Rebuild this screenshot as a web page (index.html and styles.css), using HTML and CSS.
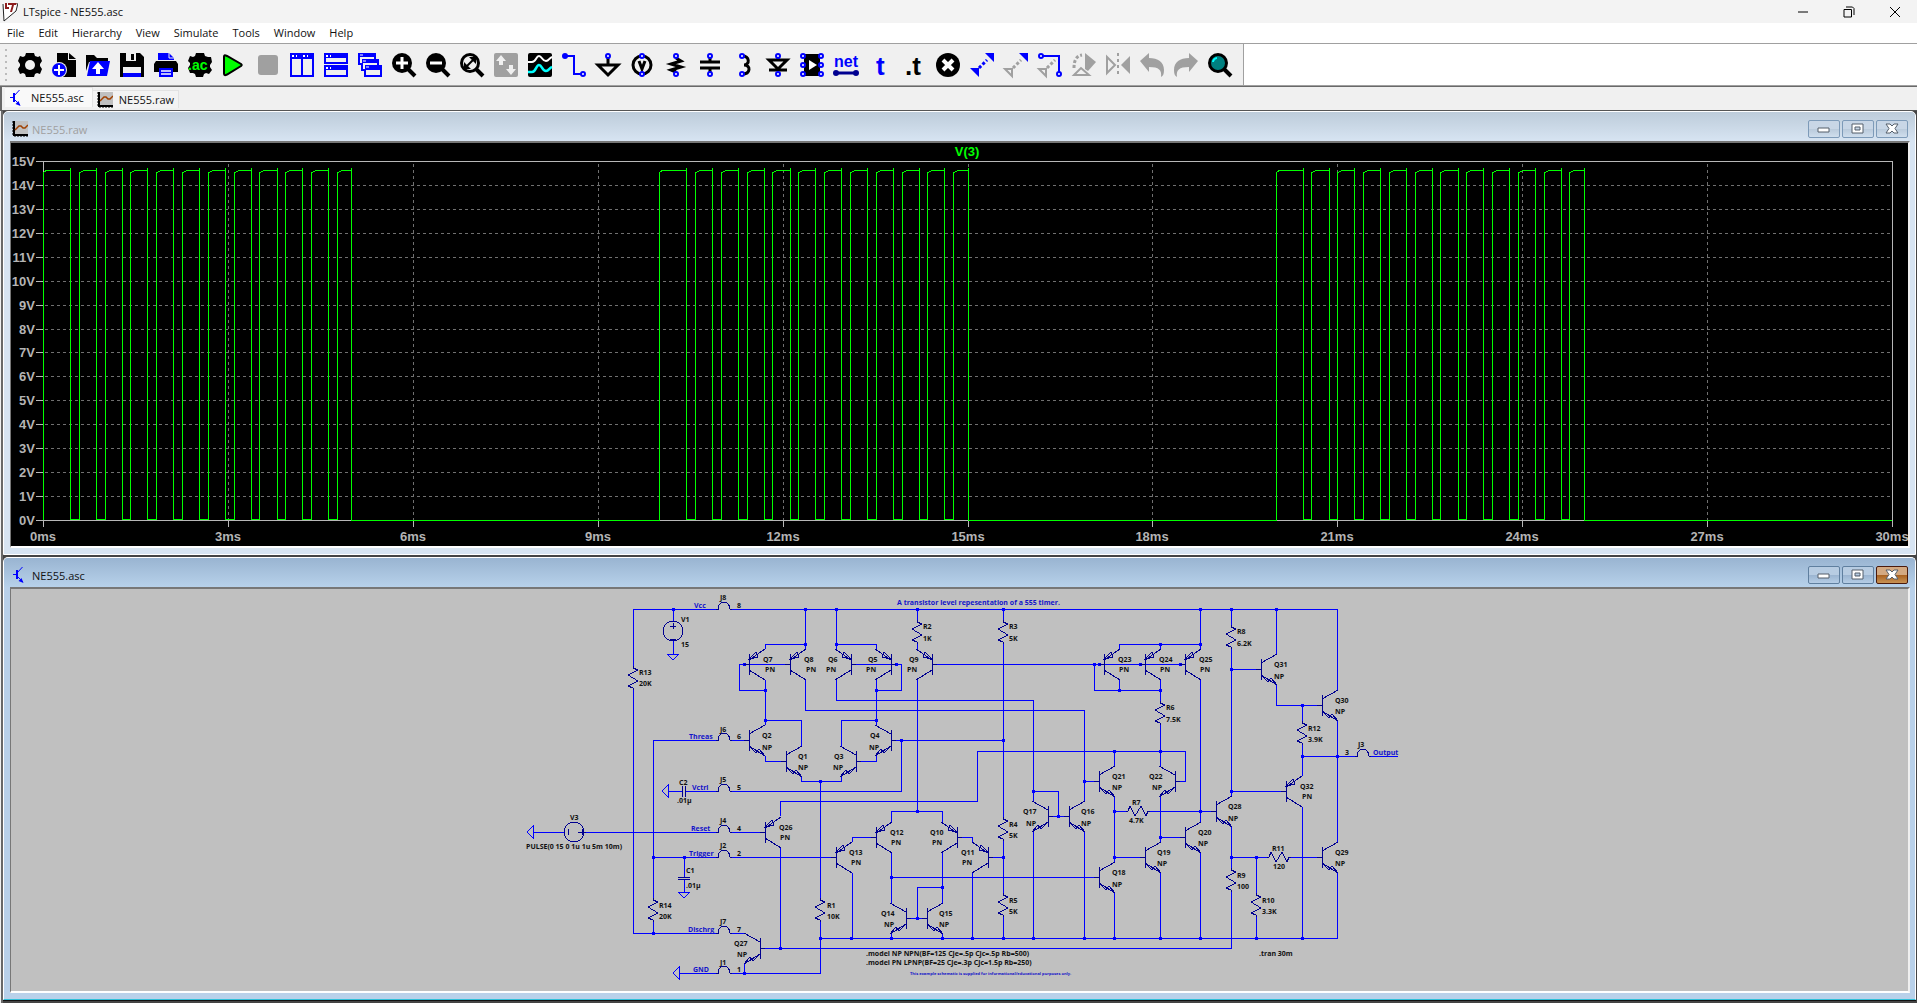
FILE: index.html
```html
<!DOCTYPE html>
<html lang="en">
<head>
<meta charset="utf-8">
<title>LTspice - NE555.asc</title>
<link rel="stylesheet" href="styles.css">
</head>
<body>
<svg class="sprites" aria-hidden="true">
  <defs>
    <symbol id="i-trace" viewBox="0 0 16 16"><path fill="#c0c0c0" d="M3 0h13v13H3z"/><path stroke="#000" stroke-width="2" fill="none" d="M2 0v14H16"/><path stroke="#000" fill="none" d="M0 1h2M0 4h2M0 7h2M0 10h2M0 13h2M3 16v-2M6 16v-2M9 16v-2M12 16v-2M15 16v-2"/><path stroke="#a04000" stroke-width="1.5" fill="none" d="M3 9l2-2 2-2 2 0 2 2h2l3-3"/></symbol>
    <symbol id="i-bjt" viewBox="0 0 16 16"><path stroke="#00f" fill="none" d="M1 7.500h4M10.500 0L5 6M5 9l6 6"/><path stroke="#00f" stroke-width="2" d="M5 3v9"/><path fill="#00f" d="M11.500 16l-5-2 3-3z"/></symbol>
    <symbol id="b-min" viewBox="0 0 32 18"><path class="glyph" d="M10 8h11v4H10z"/></symbol>
    <symbol id="b-max" viewBox="0 0 32 18"><path class="glyph" fill-rule="evenodd" d="M10 4h11v9H10zM13 7v3h5V7z"/></symbol>
    <symbol id="b-close" viewBox="0 0 32 18"><path class="glyph" d="M10 4h4l2 2 2-2h4l-3 4.500 3 4.500h-4l-2-2-2 2h-4l3-4.500z"/></symbol>
  </defs>
</svg>

<header class="titlebar">
  <svg class="app-icon" viewBox="0 0 16 20"><path d="M1 2L2 19 14 9 16 1" fill="#fff" stroke="#222"/><path d="M3 1v6h4V5H5V1zM6 1h9l-1 2h-2l-2 7H8l2-7H6z" fill="#8c1c1c"/></svg>
  <h1>LTspice - NE555.asc</h1>
  <div class="caption">
    <button aria-label="Minimize"><svg viewBox="0 0 12 12"><path d="M1 6h10"/></svg></button>
    <button aria-label="Restore"><svg viewBox="0 0 12 12"><path d="M1 3.500h7.500V11H1zM3 1h6.500L11 2.500V9"/></svg></button>
    <button aria-label="Close"><svg viewBox="0 0 12 12"><path d="M1 1l10 10M11 1L1 11"/></svg></button>
  </div>
</header>

<nav class="menu">
  <button>File</button><button>Edit</button><button>Hierarchy</button><button>View</button><button>Simulate</button><button>Tools</button><button>Window</button><button>Help</button>
</nav>

<div class="toolrow">
<div class="toolbar" role="toolbar">
  <span class="grip"></span>
  <button aria-label="Settings"><svg viewBox="0 0 24 24"><path d="M8 0h8l1 3 3 1 2-1 2 5-2 3v2l2 3-2 5-3-1-2 1-1 3H8l-1-3-2-1-3 1-2-5 2-3v-2L0 8l2-5 3 1 2-1z"/><circle cx="12" cy="12" r="5" fill="#f0f0f0"/></svg></button>
  <button aria-label="New schematic"><svg viewBox="0 0 24 24"><path d="M5 0h11v7h8v17H5z"/><path d="M17 0l7 6h-7z"/><circle cx="7" cy="17" r="8" fill="#f0f0f0"/><circle cx="7" cy="17" r="7" class="b"/><path class="sw" d="M7 12v10M2 17h10"/></svg></button>
  <button aria-label="Open"><svg viewBox="0 0 24 24"><path d="M0 2h8l3 3h11v4H3l-3 9z"/><path class="b" d="M4 8h20l-3 15H1z"/><path fill="#fff" d="M12 9l6 7h-4v5h-4v-5H6z"/></svg></button>
  <button aria-label="Save"><svg viewBox="0 0 24 24"><path d="M0 0h20l4 4v20H0z"/><path fill="#f0f0f0" d="M6 0h10v8H6zM3 14h18v6H3z"/><path d="M11 1h3v6h-3z"/><path class="b" d="M3 20h18v4H3z"/></svg></button>
  <button aria-label="Print"><svg viewBox="0 0 24 24"><path class="b" d="M4 0h11l5 5v2H4zM5 15h14v9H5z"/><path stroke="#f0f0f0" fill="none" d="M15 0v5h5"/><path d="M2 8h20l2 3v8h-5v-4H5v4H0v-8z"/><path stroke="#fff" stroke-width="1.500" d="M7 18h10M7 21h10"/></svg></button>
  <button aria-label="Configure analysis"><svg viewBox="0 0 24 24"><path d="M8 0h8l1 3 3 1 3 0 1 5-2 3v2l2 3-3 4-3-1-2 1-1 3H8l-1-3-2-1-3 0-2-5 2-3v-2L0 8l2-5 3 1 2-1z"/><text x="0" y="17" class="ac">.ac</text></svg></button>
  <button aria-label="Run"><svg viewBox="0 0 24 24"><path d="M2 3.500v17c0 2 1 2 3 1L19 13c1-1 1-1 0-2L5 3C3 2 2 2 2 3.500z" fill="#0f0" stroke="#000" stroke-width="2"/></svg></button>
  <button aria-label="Stop"><svg viewBox="0 0 24 24"><rect x="2" y="2" width="20" height="20" rx="3" fill="#a0a0a0"/></svg></button>
  <button aria-label="Tile vertically"><svg viewBox="0 0 24 24"><path class="b" d="M0 0h24v24H0z"/><path fill="#f0f0f0" d="M2 6h9v16H2zM13 6h9v16h-9z"/><path stroke="#fff" stroke-width="2" d="M2 3h2M6 3h1M13 3h2M17 3h1"/></svg></button>
  <button aria-label="Tile horizontally"><svg viewBox="0 0 24 24"><path class="b" d="M0 0h24v11H0zM0 12h24v12H0z"/><path fill="#f0f0f0" d="M2 5h20v4H2zM2 17h20v5H2z"/><path stroke="#fff" stroke-width="2" d="M2 3h2M6 3h1M2 15h2M6 15h1"/></svg></button>
  <button aria-label="Cascade"><svg viewBox="0 0 24 24"><path class="b" d="M0 0h18v6h3v6h3v12H6v-6H3v-6H0z"/><path fill="#f0f0f0" d="M2 4h14v2H4v4H2zM5 10h14v2H7v4H5zM8 17h14v5H8z"/><path stroke="#fff" d="M2 2h3M5 8h3M8 14h3"/></svg></button>
  <button aria-label="Zoom in"><svg viewBox="0 0 24 24"><path class="k3" d="M16 16l7 7"/><circle cx="10" cy="10" r="10"/><path class="sw3" d="M10 4v12M4 10h12"/></svg></button>
  <button aria-label="Zoom out"><svg viewBox="0 0 24 24"><path class="k3" d="M16 16l7 7"/><circle cx="10" cy="10" r="10"/><path class="sw3" d="M4 10h12"/></svg></button>
  <button aria-label="Zoom to fit"><svg viewBox="0 0 24 24"><path class="k3" d="M16 16l7 7"/><circle cx="10" cy="10" r="10"/><circle cx="10" cy="10" r="7" fill="#f0f0f0"/><path d="M9 4h7v7zM4 9v7h7z"/><path stroke="#000" stroke-width="2" d="M6 14l8-8"/></svg></button>
  <button aria-label="Autorange"><svg viewBox="0 0 24 24"><rect width="24" height="24" rx="2" fill="#a0a0a0"/><path fill="#f0f0f0" d="M7 2l5 6H9v4H5V8H2zM17 22l5-6h-3v-4h-4v4h-3z"/></svg></button>
  <button aria-label="Plot"><svg viewBox="0 0 24 24"><rect width="24" height="24" rx="2"/><path class="sw" d="M0 9h4c4 0 4-6 7-6s3 5 7 5c3 0 3-3 6-4"/><path fill="none" stroke="#0ff" stroke-width="2.500" d="M0 19h4c4 0 4-7 7-7s3 6 7 6c3 0 3-3 6-4"/></svg></button>
  <button aria-label="Wire"><svg viewBox="0 0 24 24"><path class="bl" d="M3 3h9v18h8"/><circle class="b" cx="3" cy="3" r="3"/><circle class="pin" cx="21" cy="21" r="2"/></svg></button>
  <button aria-label="Ground"><svg viewBox="0 0 24 24"><path class="kl" d="M12 4v8M2 12h20L12 22z"/><circle class="pin" cx="12" cy="3" r="2"/></svg></button>
  <button aria-label="Voltage source"><svg viewBox="0 0 24 24"><circle class="kl" cx="12" cy="12" r="9"/><path class="kl" d="M9 8l3 8 3-8"/><circle class="pin" cx="12" cy="3" r="2"/><circle class="pin" cx="12" cy="21" r="2"/></svg></button>
  <button aria-label="Resistor"><svg viewBox="0 0 24 24"><path class="kl" d="M12 5l5 3-10 3 10 3-10 3 5 2"/><circle class="pin" cx="12" cy="3" r="2"/><circle class="pin" cx="12" cy="21" r="2"/></svg></button>
  <button aria-label="Capacitor"><svg viewBox="0 0 24 24"><path class="kl" d="M12 4v5M12 15v5M2 9h20M2 15h20"/><circle class="pin" cx="12" cy="3" r="2"/><circle class="pin" cx="12" cy="21" r="2"/></svg></button>
  <button aria-label="Inductor"><svg viewBox="0 0 24 24"><path class="kl" d="M10 3c8 0 8 9 2 9 7 0 7 9-2 9"/><circle class="pin" cx="10" cy="3" r="2"/><circle class="pin" cx="10" cy="21" r="2"/></svg></button>
  <button aria-label="Diode"><svg viewBox="0 0 24 24"><path class="kl" d="M3 7h18l-9 9zM3 17h18M12 4v3"/><circle class="pin" cx="12" cy="3" r="2"/><circle class="pin" cx="12" cy="21" r="2"/></svg></button>
  <button aria-label="Component"><svg viewBox="0 0 24 24"><path d="M4 1h16v22H4z"/><path fill="#fff" d="M9 7l8 5-8 5z"/><g class="pin"><circle cx="3" cy="3" r="2"/><circle cx="3" cy="12" r="2"/><circle cx="3" cy="21" r="2"/><circle cx="21" cy="3" r="2"/><circle cx="21" cy="12" r="2"/><circle cx="21" cy="21" r="2"/></g></svg></button>
  <button aria-label="Net name"><svg viewBox="0 0 24 24"><text x="0" y="14" class="net">net</text><path stroke="#000090" stroke-width="3" d="M2 20h20"/><circle cx="2" cy="20" r="3" fill="#000090"/><circle cx="22" cy="20" r="3" fill="#000090"/></svg></button>
  <button aria-label="Text"><svg viewBox="0 0 24 24"><text x="8" y="22" class="tee b">t</text></svg></button>
  <button aria-label="SPICE directive"><svg viewBox="0 0 24 24"><text x="3" y="22" class="tee">.t</text></svg></button>
  <button aria-label="Delete"><svg viewBox="0 0 24 24"><circle cx="12" cy="12" r="12"/><path class="sw4" d="M7 7l10 10M17 7L7 17"/></svg></button>
  <button aria-label="Duplicate"><svg viewBox="0 0 24 24"><path class="b" d="M15 0h9v9zM0 15h9v9z"/><path class="bl dots" d="M9 15l8-8"/></svg></button>
  <button aria-label="Move"><svg viewBox="0 0 24 24"><path class="b" d="M15 0h9v9z"/><path class="gl" d="M1 16h7v7z"/><path class="gl dots" d="M9 15l8-8"/></svg></button>
  <button aria-label="Drag"><svg viewBox="0 0 24 24"><path class="bl" d="M4 3h17v17"/><path class="gl" d="M1 16h7v7z"/><path class="gl dots" d="M9 15l8-8"/><circle class="pin" cx="3" cy="3" r="2"/><circle class="pin" cx="21" cy="21" r="2"/></svg></button>
  <button aria-label="Rotate"><svg viewBox="0 0 24 24"><path class="g" d="M13 0l11 9-8 9-3-2z"/><path class="gl" d="M2 22l7-7 8 7z"/><path class="gl dots" d="M2 15C2 8 4 3 10 2"/></svg></button>
  <button aria-label="Mirror"><svg viewBox="0 0 24 24"><path class="g" d="M24 3v18l-9-9z"/><path class="gl" d="M1 4v16l8-8z"/><path class="gl dash" d="M12 0v24"/></svg></button>
  <button aria-label="Undo"><svg viewBox="0 0 24 24"><path class="g" d="M0 8l9-8v5c9 0 15 4 15 12 0 4-1 6-3 7 1-7-2-10-12-10v5z"/></svg></button>
  <button aria-label="Redo"><svg viewBox="0 0 24 24"><path class="g" d="M24 8l-9-8v5C6 5 0 9 0 17c0 4 1 6 3 7-1-7 2-10 12-10v5z"/></svg></button>
  <button aria-label="Find"><svg viewBox="0 0 24 24"><path class="k3" d="M16 16l7 7"/><circle cx="10" cy="10" r="8.500" fill="#008080" stroke="#000" stroke-width="3"/><path fill="none" stroke="#0ff" stroke-width="2" d="M5 9c0-2 2-4 4-4"/></svg></button>
</div>
</div>

<div class="tabs">
  <button class="tab tab-on"><svg><use href="#i-bjt"/></svg>NE555.asc</button>
  <button class="tab"><svg><use href="#i-trace"/></svg>NE555.raw</button>
</div>

<main class="mdi">
  <section class="win">
    <div class="win-title">
      <svg class="doc"><use href="#i-trace"/></svg><h2>NE555.raw</h2>
      <button aria-label="Minimize"><svg><use href="#b-min"/></svg></button>
      <button aria-label="Maximize"><svg><use href="#b-max"/></svg></button>
      <button aria-label="Close"><svg><use href="#b-close"/></svg></button>
    </div>
    <svg class="view plot" viewBox="11 143 1897 403">
      <path class="grid" d="M45 496H1892M45 472H1892M45 448H1892M45 424H1892M45 400H1892M45 376H1892M45 352H1892M45 329H1892M45 305H1892M45 281H1892M45 257H1892M45 233H1892M45 209H1892M45 185H1892M228 164V520M413 164V520M598 164V520M783 164V520M968 164V520M1152 164V520M1337 164V520M1522 164V520M1707 164V520"/>
      <path class="axis" d="M36 161H1892V527M36 520H1892M43 161V527M36 496h7M36 472h7M36 448h7M36 424h7M36 400h7M36 376h7M36 352h7M36 329h7M36 305h7M36 281h7M36 257h7M36 233h7M36 209h7M36 185h7M228 520v7M413 520v7M598 520v7M783 520v7M968 520v7M1152 520v7M1337 520v7M1522 520v7M1707 520v7"/>
      <path class="trace" d="M43 520V173l4-3H70v-2V519H79V173l4-2 5-1H96v-2V519H105V173l4-2 5-1H122v-2V519H130V173l4-2 5-1H147v-2V519H156V173l4-2 5-1H173v-2V519H182V173l4-2 5-1H199v-2V519H208V173l4-2 5-1H225v-2V519H234V173l4-2 5-1H251v-2V519H259V173l4-2 5-1H277v-2V519H285V173l4-2 5-1H302v-2V519H311V173l4-2 5-1H328v-2V519H337V173l4-2 5-1H351v-2V520
      H659V173l4-3H686v-2V519H695V173l4-2 5-1H712v-2V519H721V173l4-2 5-1H738v-2V519H747V173l4-2 5-1H764v-2V519H772V173l4-2 5-1H790v-2V519H798V173l4-2 5-1H815v-2V519H824V173l4-2 5-1H841v-2V519H850V173l4-2 5-1H867v-2V519H876V173l4-2 5-1H893v-2V519H902V173l4-2 5-1H919v-2V519H927V173l4-2 5-1H944v-2V519H953V173l4-2 5-1H968v-2V520
      H1276V173l4-3H1303v-2V519H1311V173l4-2 5-1H1329v-2V519H1337V173l4-2 5-1H1354v-2V519H1363V173l4-2 5-1H1380v-2V519H1389V173l4-2 5-1H1406v-2V519H1415V173l4-2 5-1H1432v-2V519H1440V173l4-2 5-1H1458v-2V519H1466V173l4-2 5-1H1483v-2V519H1492V173l4-2 5-1H1509v-2V519H1518V173l4-2 5-1H1535v-2V519H1544V173l4-2 5-1H1561v-2V519H1569V173l4-2 5-1H1584v-2V520H1892"/>
      <text class="tname" x="967" y="156">V(3)</text>
      <g class="ylab"><text x="35" y="166">15V</text><text x="35" y="190">14V</text><text x="35" y="214">13V</text><text x="35" y="238">12V</text><text x="35" y="262">11V</text><text x="35" y="286">10V</text><text x="35" y="310">9V</text><text x="35" y="334">8V</text><text x="35" y="357">7V</text><text x="35" y="381">6V</text><text x="35" y="405">5V</text><text x="35" y="429">4V</text><text x="35" y="453">3V</text><text x="35" y="477">2V</text><text x="35" y="501">1V</text><text x="35" y="525">0V</text></g>
      <g class="xlab"><text x="43" y="541">0ms</text><text x="228" y="541">3ms</text><text x="413" y="541">6ms</text><text x="598" y="541">9ms</text><text x="783" y="541">12ms</text><text x="968" y="541">15ms</text><text x="1152" y="541">18ms</text><text x="1337" y="541">21ms</text><text x="1522" y="541">24ms</text><text x="1707" y="541">27ms</text><text x="1892" y="541">30ms</text></g>
    </svg>
  </section>

  <section class="win win-on">
    <div class="win-title">
      <svg class="doc"><use href="#i-bjt"/></svg><h2>NE555.asc</h2>
      <button aria-label="Minimize"><svg><use href="#b-min"/></svg></button>
      <button aria-label="Maximize"><svg><use href="#b-max"/></svg></button>
      <button class="close" aria-label="Close"><svg><use href="#b-close"/></svg></button>
    </div>
    <svg class="view schem" viewBox="11 589 1897 402">
      <defs>
        <g id="n"><path d="M0-10V11M0-6L16-15M0 6L16 16L10 9L7 13Z M-5 0H0"/></g>
        <g id="p"><path d="M0-10V11M0-4L16-15M0-5L7-12L9-7ZM0 6L16 16M-5 0H0"/></g>
        <g id="r"><path d="M0-12V-10L5-8L-5-3L5 3L-5 8L0 10V12"/></g>
        <g id="j"><path d="M-8 0H-6A6 7 0 0 1 6 0H8"/></g>
        <g id="gd"><path d="M-6 0H6L0 6Z"/></g>
      </defs>
      <path class="wire" d="M633 667V609H717M732 609H1337V690M673 609V621M673 641V654M633 688V933H717M732 933H744M760 948H1231V891M679 973H717M732 973H820V921M744 964V973M717 740H653V898M653 921V933M653 857H717M732 857H836M852 842V837H876M852 873V938M684 857V877M684 880V892M533 832H564M584 832H717M732 832H765M780 816V801H977V751H1185V781H1175M780 847V948M668 791H682M685 791H717M732 791H901V740M732 740H749M765 725V680M765 756V761H786M801 746V720H765M801 777V781H841V777M841 746V720H876M856 761H876V756M876 725V680M891 740H1003M820 781V898M765 649V644H805M765 690H739V664H790M805 649V609M805 680V710H1084V801M1084 781H1099M836 649V609M836 644H876V649M836 680V700H1033V801M851 664H901V690H876M917 609V621M917 643V649M917 680V811M891 822V811H942V822M891 853V903M942 853V903M957 837H972V842M972 873V938M988 857H1003M932 664H1185M891 934V938M942 934V938M906 918H927M917 918V887H942M891 877H1099M1003 609V621M1003 643V818M1003 840V894M1003 916V938M820 938H1337V873M1048 816H1069M1058 816V791H1033M1033 832V938M1084 832V938M1114 766V751M1114 797V862M1114 811H1127M1148 811H1216M1231 827V869M1114 893V938M1160 766V724M1160 797V842M1114 857H1145M1160 873V938M1160 837H1185M1200 822V680M1200 853V938M1160 702V680M1119 649V644H1200M1119 680V690M1160 649V644M1200 649V609M1160 690H1094V664M1231 609V626M1231 648V796M1231 669H1261M1276 654V609M1276 685V705H1322M1337 721V842M1302 705V722M1302 744V776M1302 756H1355M1371 756H1398M1302 807V938M1231 791H1286M1231 857H1268M1290 857H1322M1256 857V894M1256 916V938"/>
      <path class="dot" d="M673 609h0M805 609h0M836 609h0M917 609h0M1003 609h0M1200 609h0M1231 609h0M1276 609h0M805 644h0M836 644h0M1160 644h0M1200 644h0M744 664h0M896 664h0M1094 664h0M1099 664h0M1140 664h0M1180 664h0M765 690h0M876 690h0M1119 690h0M1160 690h0M765 720h0M876 720h0M901 740h0M1003 740h0M820 781h0M917 811h0M891 877h0M942 887h0M917 918h0M653 857h0M684 857h0M653 933h0M744 973h0M780 948h0M1003 857h0M1033 791h0M1058 816h0M1084 781h0M1114 751h0M1160 751h0M1114 811h0M1114 857h0M1160 837h0M1200 811h0M1231 669h0M1231 791h0M1302 705h0M1302 756h0M1337 756h0M1231 857h0M1256 857h0M820 938h0M851 938h0M891 938h0M942 938h0M972 938h0M1003 938h0M1033 938h0M1084 938h0M1114 938h0M1160 938h0M1200 938h0M1256 938h0M1302 938h0"/>
      <g class="part">
        <use href="#p" x="749" y="664"/><use href="#p" x="790" y="664"/><use href="#p" transform="translate(851 664) scale(-1 1)"/><use href="#p" transform="translate(891 664) scale(-1 1)"/><use href="#p" transform="translate(932 664) scale(-1 1)"/>
        <use href="#p" x="1104" y="664"/><use href="#p" x="1145" y="664"/><use href="#p" x="1185" y="664"/><use href="#p" x="765" y="832"/><use href="#p" x="836" y="857"/><use href="#p" x="876" y="837"/><use href="#p" transform="translate(957 837) scale(-1 1)"/><use href="#p" transform="translate(988 857) scale(-1 1)"/><use href="#p" x="1286" y="791"/>
        <use href="#n" x="749" y="740"/><use href="#n" x="786" y="761"/><use href="#n" transform="translate(856 761) scale(-1 1)"/><use href="#n" transform="translate(891 740) scale(-1 1)"/><use href="#n" transform="translate(760 948) scale(-1 1)"/><use href="#n" transform="translate(906 918) scale(-1 1)"/><use href="#n" x="927" y="918"/><use href="#n" transform="translate(1048 816) scale(-1 1)"/><use href="#n" x="1069" y="816"/><use href="#n" x="1099" y="781"/><use href="#n" transform="translate(1175 781) scale(-1 1)"/><use href="#n" x="1099" y="877"/><use href="#n" x="1145" y="857"/><use href="#n" x="1185" y="837"/><use href="#n" x="1216" y="811"/><use href="#n" x="1261" y="669"/><use href="#n" x="1322" y="705"/><use href="#n" x="1322" y="857"/>
        <use href="#r" x="633" y="678"/><use href="#r" x="653" y="910"/><use href="#r" x="820" y="910"/><use href="#r" x="917" y="632"/><use href="#r" x="1003" y="632"/><use href="#r" x="1003" y="829"/><use href="#r" x="1003" y="905"/><use href="#r" x="1160" y="713"/><use href="#r" x="1231" y="637"/><use href="#r" x="1231" y="880"/><use href="#r" x="1256" y="905"/><use href="#r" x="1302" y="733"/><use href="#r" transform="translate(1138 811) rotate(-90)"/><use href="#r" transform="translate(1279 857) rotate(-90)"/>
        <use href="#j" x="724" y="609"/><use href="#j" x="724" y="740"/><use href="#j" x="724" y="791"/><use href="#j" x="724" y="832"/><use href="#j" x="724" y="857"/><use href="#j" x="724" y="933"/><use href="#j" x="724" y="973"/><use href="#j" x="1363" y="756"/>
        <circle cx="673" cy="631" r="10"/><circle cx="574" cy="832" r="10"/>
        <path d="M670 626h6M673 623v6M670 639h6M568 829v6M578 832h8M582 829v6M682 786v11M685 786v11M678 877h12M678 879h12"/>
      </g>
      <g class="gnd"><use href="#gd" x="673" y="654"/><use href="#gd" x="684" y="892"/><use href="#gd" transform="translate(533 832) rotate(90)"/><use href="#gd" transform="translate(668 791) rotate(90)"/><use href="#gd" transform="translate(679 973) rotate(90)"/></g>
      <g class="lab">
        <text x="720" y="600">J8</text><text x="737" y="608">8</text><text x="681" y="622">V1</text><text x="681" y="647">15</text><text x="639" y="675">R13</text><text x="639" y="686">20K</text>
        <text x="763" y="662">Q7</text><text x="765" y="672">PN</text><text x="804" y="662">Q8</text><text x="806" y="672">PN</text><text x="828" y="662">Q6</text><text x="826" y="672">PN</text><text x="868" y="662">Q5</text><text x="866" y="672">PN</text><text x="909" y="662">Q9</text><text x="907" y="672">PN</text>
        <text x="923" y="629">R2</text><text x="923" y="641">1K</text><text x="762" y="738">Q2</text><text x="762" y="750">NP</text><text x="798" y="759">Q1</text><text x="798" y="770">NP</text><text x="834" y="759">Q3</text><text x="833" y="770">NP</text><text x="870" y="738">Q4</text><text x="869" y="750">NP</text>
        <text x="720" y="732">J6</text><text x="737" y="739">6</text><text x="720" y="782">J5</text><text x="737" y="790">5</text><text x="679" y="785">C2</text><text x="677" y="803">.01µ</text><text x="570" y="820">V3</text><text x="526" y="849">PULSE(0 15 0 1u 1u 5m 10m)</text><text x="720" y="823">J4</text><text x="737" y="831">4</text>
        <text x="779" y="830">Q26</text><text x="780" y="840">PN</text><text x="720" y="848">J2</text><text x="737" y="856">2</text><text x="686" y="873">C1</text><text x="686" y="888">.01µ</text><text x="849" y="855">Q13</text><text x="851" y="865">PN</text><text x="890" y="835">Q12</text><text x="891" y="845">PN</text>
        <text x="659" y="908">R14</text><text x="659" y="919">20K</text><text x="827" y="908">R1</text><text x="827" y="919">10K</text><text x="720" y="924">J7</text><text x="737" y="932">7</text><text x="734" y="946">Q27</text><text x="737" y="957">NP</text><text x="720" y="965">J1</text><text x="737" y="972">1</text><text x="881" y="916">Q14</text><text x="884" y="927">NP</text>
        <text x="866" y="956">.model NP NPN(BF=125 Cje=.5p Cjc=.5p Rb=500)</text><text x="866" y="965">.model PN LPNP(BF=25 Cje=.3p Cjc=1.5p Rb=250)</text><text x="1259" y="956">.tran 30m</text>
        <text x="1009" y="629">R3</text><text x="1009" y="641">5K</text><text x="1118" y="662">Q23</text><text x="1119" y="672">PN</text><text x="1159" y="662">Q24</text><text x="1160" y="672">PN</text><text x="1199" y="662">Q25</text><text x="1200" y="672">PN</text><text x="1237" y="634">R8</text><text x="1237" y="646">6.2K</text><text x="1274" y="667">Q31</text><text x="1274" y="679">NP</text>
        <text x="1166" y="710">R6</text><text x="1166" y="722">7.5K</text><text x="1335" y="703">Q30</text><text x="1335" y="714">NP</text><text x="1308" y="731">R12</text><text x="1308" y="742">3.9K</text><text x="1358" y="747">J3</text><text x="1345" y="755">3</text><text x="1112" y="779">Q21</text><text x="1112" y="790">NP</text><text x="1149" y="779">Q22</text><text x="1152" y="790">NP</text><text x="1300" y="789">Q32</text><text x="1302" y="799">PN</text>
        <text x="1023" y="814">Q17</text><text x="1026" y="826">NP</text><text x="1081" y="814">Q16</text><text x="1081" y="826">NP</text><text x="1132" y="805">R7</text><text x="1129" y="823">4.7K</text><text x="1228" y="809">Q28</text><text x="1228" y="821">NP</text><text x="930" y="835">Q10</text><text x="932" y="845">PN</text><text x="1009" y="827">R4</text><text x="1009" y="838">5K</text><text x="961" y="855">Q11</text><text x="962" y="865">PN</text>
        <text x="1198" y="835">Q20</text><text x="1198" y="846">NP</text><text x="1157" y="855">Q19</text><text x="1157" y="866">NP</text><text x="1272" y="851">R11</text><text x="1273" y="869">120</text><text x="1335" y="855">Q29</text><text x="1335" y="866">NP</text><text x="1112" y="875">Q18</text><text x="1112" y="887">NP</text><text x="1237" y="878">R9</text><text x="1237" y="889">100</text><text x="1262" y="903">R10</text><text x="1262" y="914">3.3K</text><text x="1009" y="903">R5</text><text x="1009" y="914">5K</text><text x="939" y="916">Q15</text><text x="939" y="927">NP</text>
      </g>
      <g class="lab note">
        <text x="694" y="608">Vcc</text><text x="897" y="605">A transistor level repesentation of a 555 timer.</text><text x="689" y="739">Threas</text><text x="692" y="790">Vctrl</text><text x="691" y="831">Reset</text><text x="689" y="856">Trigger</text><text x="688" y="932">Dischrg</text><text x="693" y="972">GND</text><text x="1373" y="755">Output</text>
        <text class="fine" x="910" y="975">This example schematic is supplied for informational/educational purposes only.</text>
      </g>
    </svg>
  </section>
</main>
</body>
</html>
```
FILE: styles.css
```css
* { box-sizing: border-box; }
body {
  margin: 0;
  min-height: 100vh;
  display: flex;
  flex-direction: column;
  background: #f0f0f0;
  color: #111;
  font: 11px/16px "Open Sans", "Noto Sans", sans-serif;
}
button { margin: 0; padding: 0; border: 0; background: none; color: inherit; font: inherit; }
h1, h2 { margin: 0; font-size: 11px; font-weight: 400; }
svg { display: block; }
.sprites { position: absolute; width: 0; height: 0; }

.titlebar { display: flex; align-items: center; height: 23px; padding-left: 2px; background: #f3f3f3; }
.app-icon { width: 16px; height: 20px; margin-right: 5px; }
.titlebar h1 { flex: 1; }
.caption { display: flex; gap: 34px; padding-right: 16px; }
.caption svg { width: 12px; height: 12px; fill: none; stroke: #000; }

.menu { display: flex; gap: 14px; height: 21px; padding-left: 7px; background: #fff; border-bottom: 1px solid #a0a0a0; }
.menu button { height: 19px; }

.toolrow { display: flex; height: 43px; background: #fff; border-bottom: 1px solid #696969; box-shadow: inset 0 -1px #a0a0a0; }
.toolbar { display: flex; align-items: center; gap: 10px; padding: 0 11px 0 4px; margin-bottom: 1px; background: #f0f0f0; border-right: 1px solid #a0a0a0; }
.toolbar button, .toolbar button svg { width: 24px; height: 24px; overflow: visible; }
.grip { width: 4px; height: 34px; background: radial-gradient(circle at 2px 2px, #bbb 1px, transparent 1px) 0 0 / 4px 6px; }
.toolbar .b { fill: #00f; }
.toolbar .g { fill: #a0a0a0; }
.bl, .kl, .gl { fill: none; stroke: #00f; stroke-width: 2; }
.kl { stroke: #000; stroke-width: 3; }
.gl { stroke: #a0a0a0; }
.k3 { stroke: #000; stroke-width: 4; }
.sw, .sw3, .sw4 { fill: none; stroke: #fff; stroke-width: 2; }
.sw3 { stroke-width: 3; }
.sw4 { stroke-width: 4; }
.pin { fill: #fff; stroke: #00f; stroke-width: 2; }
.dots { stroke-width: 3; stroke-dasharray: 3 2; }
.dash { stroke-dasharray: 3 3; }
.ac, .net, .tee { font-family: "Liberation Sans", sans-serif; font-weight: 700; }
.ac { font-size: 14px; fill: #0f0; }
.net { font-size: 16px; fill: #00f; }
.tee { font-size: 26px; }

.tabs { display: flex; align-items: flex-start; height: 24px; padding-left: 3px; border-left: 2px solid #696969; border-bottom: 1px solid #555; }
.tab { display: flex; align-items: center; gap: 6px; height: 18px; margin-top: 3px; padding: 0 4px; border: 1px solid #e2e2e2; border-width: 1px 1px 0 0; background: #f3f3f3; }
.tab-on { height: 20px; margin-top: 0; padding: 0 8px 0 4px; background: #f9f9f9; }
.tab svg, .doc { width: 16px; height: 16px; }

.mdi { flex: 1; display: flex; flex-direction: column; gap: 2px; padding: 0 1px 0 3px; background: linear-gradient(90deg, #f0f0f0 0 1px, #696969 1px 3px, #444 3px); }
.win { border: 1px solid #fff; border-radius: 5px 5px 0 0; padding: 0 5px 6px 6px; background: #d7e4f2; }
.win-title { display: flex; align-items: center; gap: 2px; height: 29px; margin: 0 -5px 0 -6px; padding: 4px 7px 0 8px; border-radius: 4px 4px 0 0; background: linear-gradient(#bdccda, #d7e4f2); color: #a0a0a0; }
.win-title h2 { flex: 1; padding: 2px 0 0 2px; }
.win-title button { width: 32px; height: 18px; border: 1px solid #7d9ab8; border-radius: 2px; background: linear-gradient(#c8d6e6 50%, #b9cadb 50%, #cfdeed); }
.win-title button svg { width: 32px; height: 18px; margin: -1px; }
.glyph { fill: #fff; stroke: #555f6b; }
.view { box-sizing: content-box; width: calc(100% - 3px); height: auto; border-style: solid; border-color: #777 #f0f0f0 #fff #777; border-width: 2px 2px 2px 1px; }
.win-on { background: #b9d1ea; border-bottom-color: #2fbfd8; box-shadow: 0 1px #111; }
.win-on .win-title { background: linear-gradient(#99b4d1, #b7d1ea); color: #111; }
.win-on .win-title button { background: linear-gradient(#b7cce2 50%, #9ab4d0 50%, #b5cde6); border-color: #5f7f9f; }
.win-on .win-title .close { background: linear-gradient(#d3a982 50%, #a8601f 50%, #c89355); border-color: #4a1a0c; }

.plot { background: #000; }
.plot path { fill: none; shape-rendering: crispEdges; }
.grid { stroke: #707070; stroke-dasharray: 3 3; }
.axis { stroke: #b8b8b8; }
.trace { stroke: #0f0; }
.plot text { font: 700 13px "Liberation Sans", Arial, sans-serif; fill: #b4b4b4; text-anchor: middle; }
.plot .ylab text { text-anchor: end; }
.plot .tname { fill: #0f0; }

.schem { background: #c0c0c0; }
.wire, .part, .gnd { fill: none; stroke: #00f; shape-rendering: crispEdges; }
.part { stroke: #000090; }
.dot { stroke: #00f; stroke-width: 3; stroke-linecap: square; shape-rendering: crispEdges; }
.lab { font: 700 7px "Open Sans", "Noto Sans", sans-serif; fill: #111; }
.note { fill: #1414c8; }
.fine { font-size: 4px; }
```
